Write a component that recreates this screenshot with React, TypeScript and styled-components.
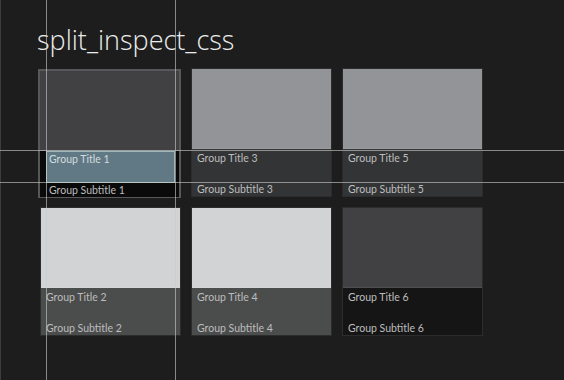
import React from "react";
import { createGlobalStyle, styled } from "styled-components";

type TileData = {
  title: string;
  subtitle: string;
  image: string;
  band: string;
  selected?: boolean;
};

const tiles: TileData[] = [
  { title: "Group Title 1", subtitle: "Group Subtitle 1", image: "#414143", band: "#0a0a0a", selected: true },
  { title: "Group Title 2", subtitle: "Group Subtitle 2", image: "#d2d3d5", band: "#4b4c4c" },
  { title: "Group Title 3", subtitle: "Group Subtitle 3", image: "#939497", band: "#333436" },
  { title: "Group Title 4", subtitle: "Group Subtitle 4", image: "#d2d3d5", band: "#4b4c4c" },
  { title: "Group Title 5", subtitle: "Group Subtitle 5", image: "#939497", band: "#333436" },
  { title: "Group Title 6", subtitle: "Group Subtitle 6", image: "#414143", band: "#151515" },
];

function Tile({ data }: { data: TileData }): React.ReactElement {
  const sel = !!data.selected;
  return (
    <TileBox $selected={sel}>
      <TileImage $color={data.image} />
      <TileBand $color={data.band} $selected={sel}>
        <TileTitle $selected={sel}>{data.title}</TileTitle>
        <TileSubtitle $selected={sel}>{data.subtitle}</TileSubtitle>
      </TileBand>
    </TileBox>
  );
}

function App(): React.ReactElement {
  return (
    <Page>
      <GlobalStyle />
      <Heading>split_inspect_css</Heading>
      <Grid>
        {tiles.map((t) => (
          <Tile key={t.title} data={t} />
        ))}
      </Grid>
      <EdgeLine />
      <VGuide $x={46} />
      <VGuide $x={175} />
      <HGuide $y={150} />
      <HGuide $y={182} />
    </Page>
  );
}

export default App;

const GlobalStyle = createGlobalStyle`
  html, body {
    margin: 0;
    padding: 0;
    background: #1d1d1d;
    overflow: hidden;
  }
`;

const Page = styled.div`
  position: relative;
  width: 564px;
  height: 380px;
  overflow: hidden;
  background: #1d1d1d;
  font-family: "Open Sans", "Noto Sans", sans-serif;
`;

const Heading = styled.h1`
  margin: 0 0 9px 37px;
  padding-top: 21px;
  height: 38px;
  font-size: 27px;
  font-weight: 300;
  line-height: 38px;
  color: #ececec;
`;

const Grid = styled.div`
  display: grid;
  grid-auto-flow: column;
  grid-template-columns: repeat(3, 141px);
  grid-template-rows: repeat(2, 129px);
  column-gap: 10px;
  row-gap: 10px;
  margin-left: 40px;
`;

const TileBox = styled.div<{ $selected: boolean }>`
  display: flex;
  flex-direction: column;
  box-sizing: border-box;
  border: ${(p) => (p.$selected ? "2px solid #58585a" : "1px solid rgba(255,255,255,0.07)")};
  ${(p) =>
    p.$selected
      ? "margin: 1px 0 0 -2px; width: 143px; height: 129px;"
      : "width: 141px; height: 129px;"}
`;

const TileImage = styled.div<{ $color: string }>`
  height: 79px;
  flex: none;
  background: ${(p) => p.$color};
  border-bottom: 1px solid rgba(255, 255, 255, 0.08);
`;

const TileBand = styled.div<{ $color: string; $selected: boolean }>`
  flex: 1;
  display: flex;
  flex-direction: column;
  background: ${(p) => p.$color};
  padding: ${(p) => (p.$selected ? "0 4px 0 6px" : "0 5px")};
  color: #bdbdbd;
  font-family: Lato, "Open Sans", sans-serif;
  font-size: 10.5px;
  line-height: 14px;
`;

const TileTitle = styled.div<{ $selected: boolean }>`
  box-sizing: border-box;
  height: 32px;
  padding: ${(p) => (p.$selected ? "0 2px" : "2px 0")};
  ${(p) =>
    p.$selected
      ? "background: #617985; border: 1px solid #9fb7b9; color: #d2dcdf;"
      : ""}
  white-space: nowrap;
`;

const TileSubtitle = styled.div<{ $selected: boolean }>`
  padding: ${(p) => (p.$selected ? "0 0 0 3px" : "1px 0 0")};
  white-space: nowrap;
`;

const EdgeLine = styled.div`
  position: absolute;
  left: 0;
  top: 0;
  width: 1px;
  height: 100%;
  background: #3c3c3c;
`;

const VGuide = styled.div<{ $x: number }>`
  position: absolute;
  top: 0;
  left: ${(p) => p.$x}px;
  width: 1px;
  height: 100%;
  background: rgba(200, 205, 200, 0.62);
`;

const HGuide = styled.div<{ $y: number }>`
  position: absolute;
  left: 0;
  top: ${(p) => p.$y}px;
  width: 100%;
  height: 1px;
  background: rgba(200, 205, 200, 0.62);
`;
